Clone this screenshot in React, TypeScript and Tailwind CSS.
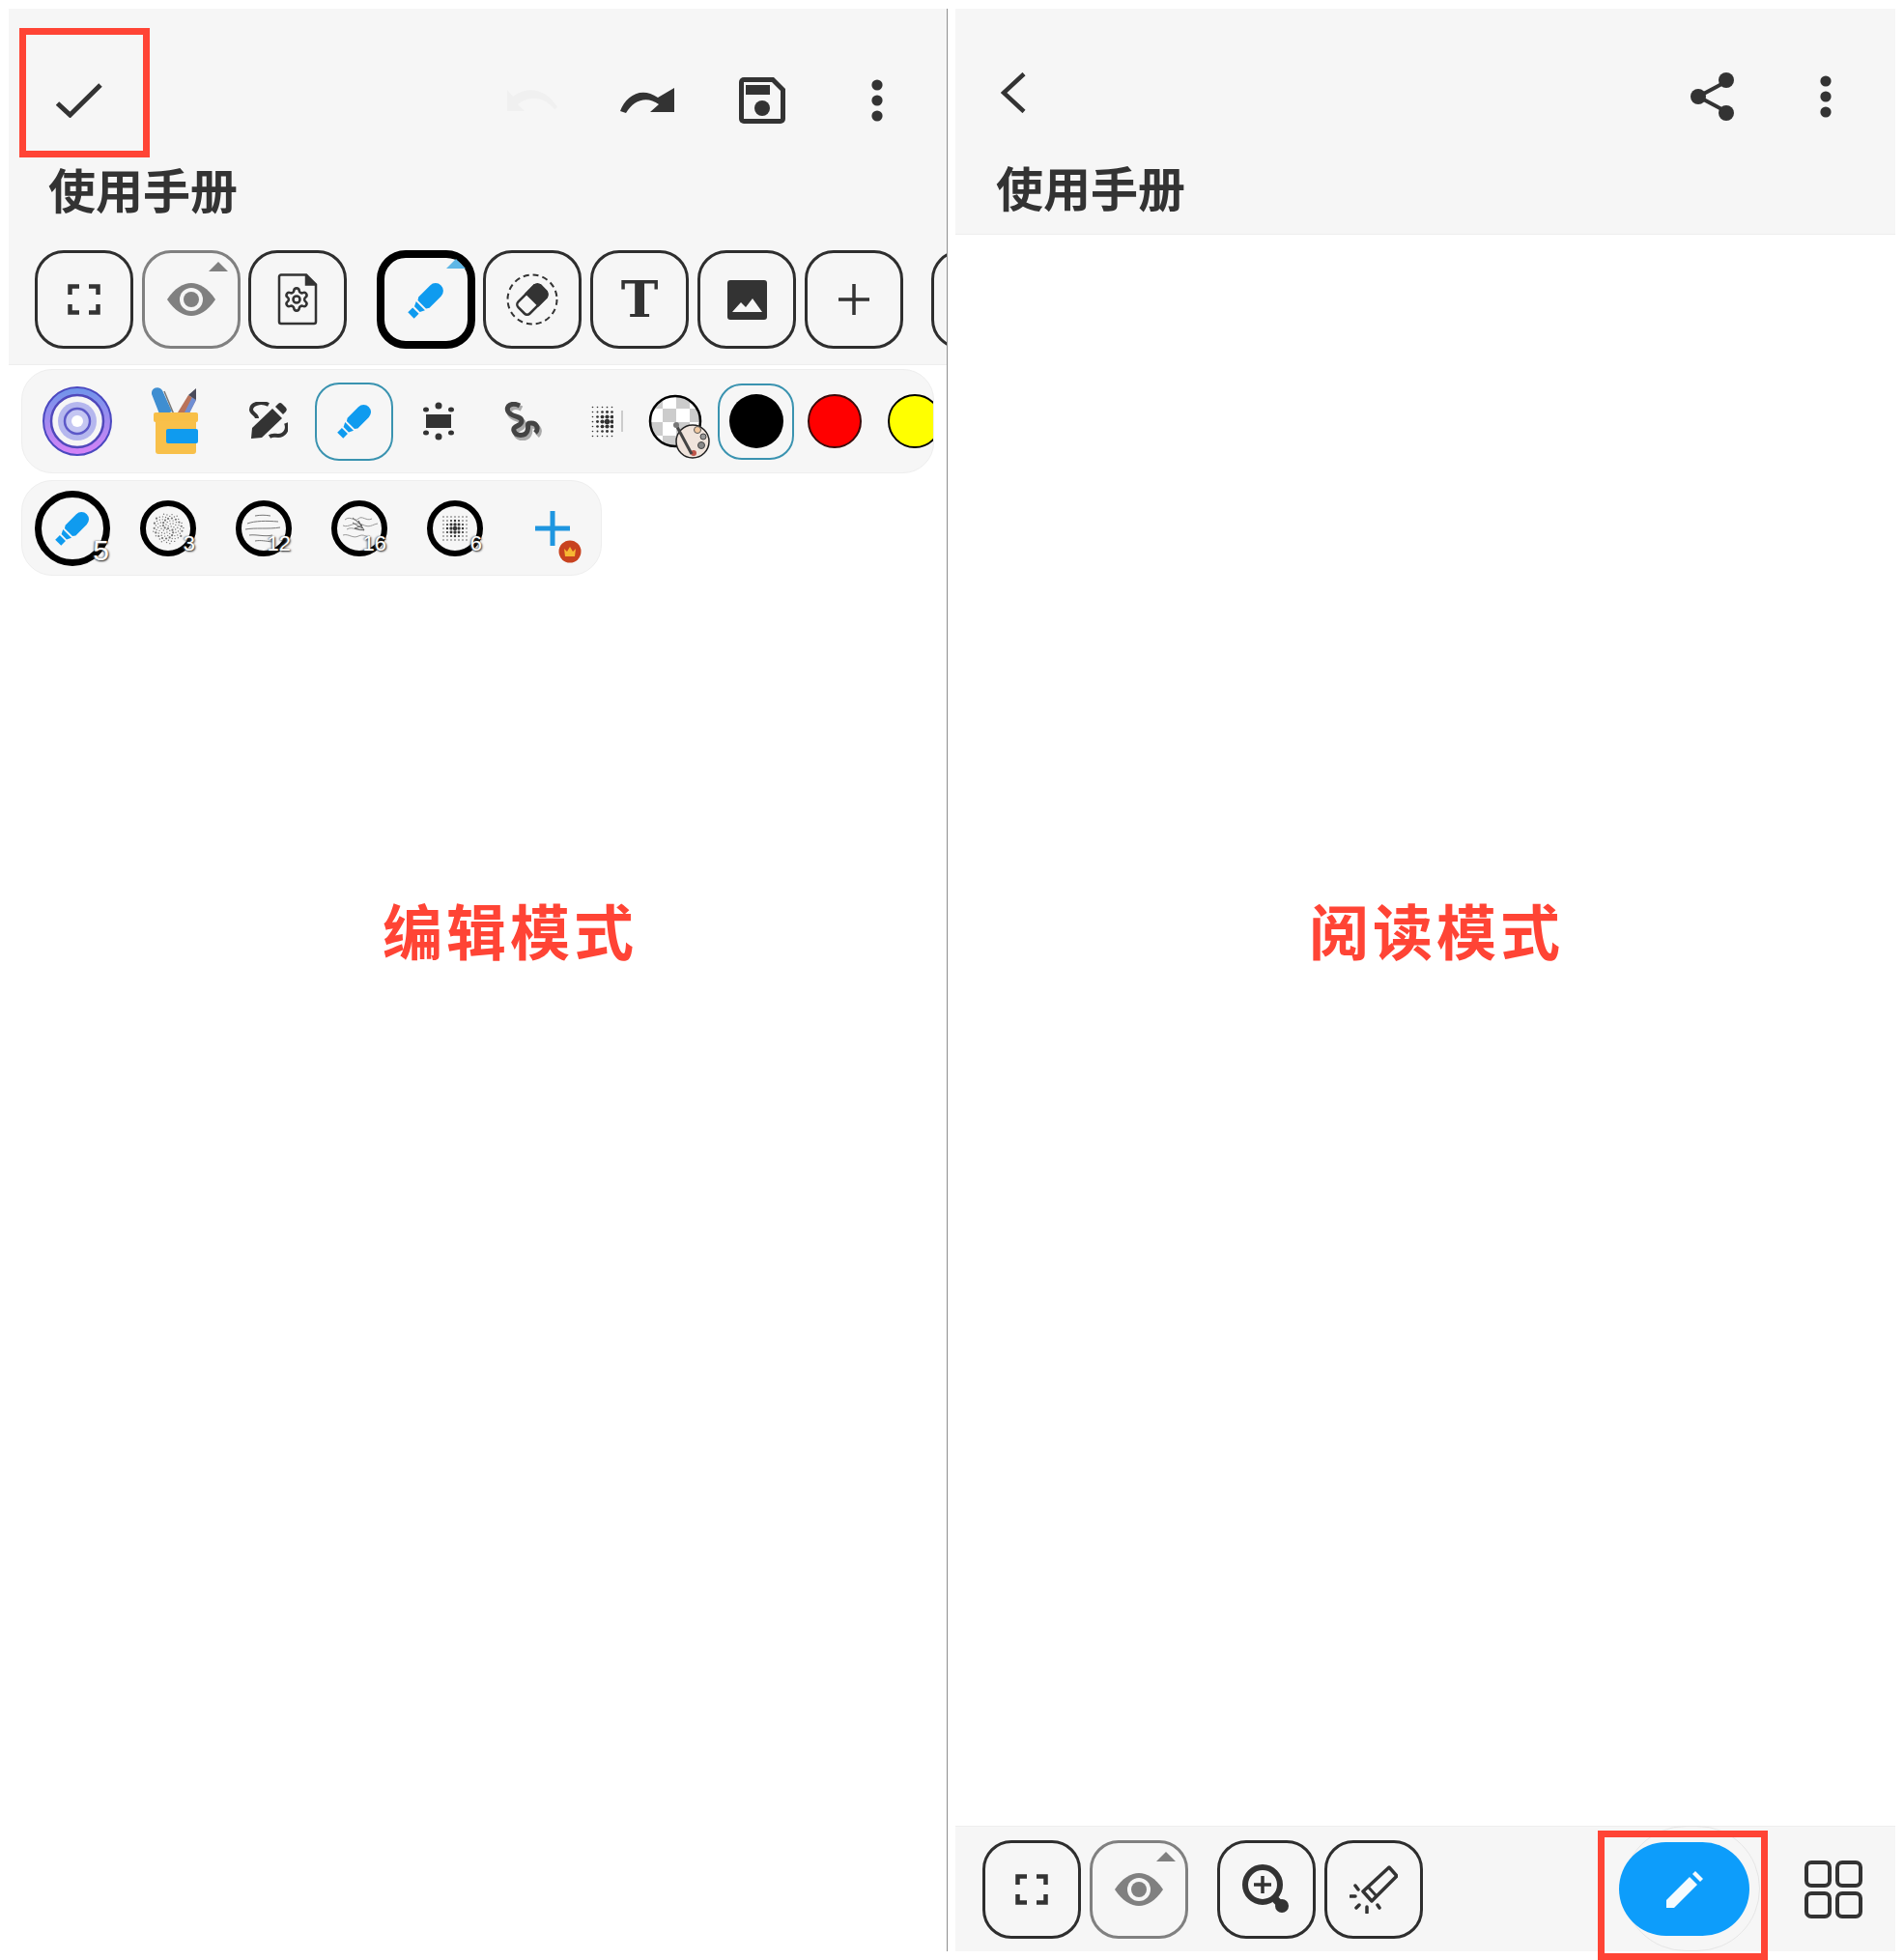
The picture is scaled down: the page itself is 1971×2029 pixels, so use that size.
import type { ReactNode } from "react";
import { Settings } from "lucide-react";

const cjk = "font-['Noto_Sans_CJK_SC','Noto_Sans',sans-serif]";

function Highlighter({ size = 40 }: { size?: number }) {
  return (
    <svg width={size} height={size} viewBox="0 0 40 40" className="overflow-visible">
      <g transform="rotate(45 20 20)" fill="#0f9bef">
        <path d="M12 6a8 8 0 0 1 16 0v17l-2 3H14l-2-3z" />
        <path d="M13.5 28h13l-2.5 5h-8z" />
        <rect x="15.5" y="35" width="9" height="7" />
      </g>
    </svg>
  );
}

function FocusIcon() {
  return (
    <svg width="34" height="32" viewBox="0 0 34 32" fill="none" stroke="#333" strokeWidth="4.5">
      <path d="M2.5 11V2.5H12M22 2.5h9.5V11M31.500 21v8.500H22M12 29.500H2.500V21" />
    </svg>
  );
}

function EyeIcon() {
  return (
    <svg width="50" height="34" viewBox="0 0 50 34">
      <path d="M0 17C8 5 17 0 25 0s17 5 25 17c-8 12-17 17-25 17S8 29 0 17z" fill="#808080" />
      <circle cx="25" cy="17" r="12" fill="#f6f6f6" />
      <circle cx="25" cy="17" r="8" fill="#808080" />
    </svg>
  );
}

function ToolButton({
  children,
  tone = "dark",
  caret,
}: {
  children: ReactNode;
  tone?: "dark" | "gray" | "active";
  caret?: string;
}) {
  const border =
    tone === "active"
      ? "border-[8px] border-black"
      : tone === "gray"
        ? "border-[3px] border-[#808080]"
        : "border-[3px] border-[#2e2e2e]";
  return (
    <div className={`relative flex h-[102px] w-[102px] shrink-0 items-center justify-center rounded-[30px] ${border}`}>
      {children}
      {caret && (
        <svg
          width="20"
          height="10"
          viewBox="0 0 20 10"
          className={`absolute ${tone === "active" ? "right-[2px] top-[1px]" : "right-[10px] top-[9px]"}`}
        >
          <path d="M0 10 10 0l10 10z" fill={caret} />
        </svg>
      )}
    </div>
  );
}

function MoreDots() {
  return (
    <svg width="12" height="44" viewBox="0 0 12 44" fill="#333">
      <circle cx="6" cy="6" r="5.600" />
      <circle cx="6" cy="22" r="5.600" />
      <circle cx="6" cy="38" r="5.600" />
    </svg>
  );
}

function Halftone({ step = 7, n = 5 }: { step?: number; n?: number }) {
  const dots = [];
  for (let i = 0; i < n; i++) {
    for (let j = 0; j < n; j++) {
      const d = Math.hypot(i - (n - 1) / 2, j - (n - 1) / 2);
      const r = Math.max(step * 0.16, step * 0.55 * (1 - d / (n * 0.62)));
      dots.push(<circle key={`${i}-${j}`} cx={i * step + step / 2} cy={j * step + step / 2} r={r} fill="#333" />);
    }
  }
  return (
    <svg width={n * step} height={n * step} viewBox={`0 0 ${n * step} ${n * step}`}>
      {dots}
    </svg>
  );
}

function SpeckleTexture() {
  const dots = [];
  for (let i = 0; i < 90; i++) {
    const a = i * 2.4;
    const r = Math.sqrt(i / 90) * 16;
    dots.push(<circle key={i} cx={29 + Math.cos(a) * r} cy={29 + Math.sin(a) * r} r={i % 4 === 0 ? 1.1 : 0.7} fill="#777" />);
  }
  return <>{dots}</>;
}

function LinesTexture() {
  return (
    <g fill="none" stroke="#777" strokeWidth="1">
      <path d="M20 16c6-1 10-1 16 0M12 24c8-3 20-3 32-2M10 30c10-2 24 0 36-2M14 36c8-1 16 2 24 0M20 42c6-1 10 0 18 1" />
    </g>
  );
}

function ScribbleTexture() {
  return (
    <g fill="none" stroke="#999" strokeWidth="1">
      <path d="M14 20c6-5 10 3 14-1s8 3 14 0M12 26c6 3 12-5 20-1s10 0 16-1M16 30c6-4 12 3 18 0M12 36c6-2 10 4 16 1s8 2 12 0" />
      <path d="M22 18l10 8-8 3 10 2-6-10 4 8-10-6" stroke="#666" />
    </g>
  );
}

function BrushCircle({ label, children }: { label: string; children: ReactNode }) {
  return (
    <div className="relative h-[58px] w-[58px] shrink-0 rounded-full border-[6px] border-black">
      <svg width="58" height="58" viewBox="0 0 58 58" className="absolute left-[-6px] top-[-6px]">
        {children}
      </svg>
      <span className="absolute bottom-[-5px] right-[-5px] font-['Liberation_Sans',sans-serif] text-[22px] leading-[24px] text-white [text-shadow:1px_1px_2px_#222,-1px_0_2px_#666]">
        {label}
      </span>
    </div>
  );
}

function EditorPane() {
  return (
    <div className="h-full w-[972px] shrink-0 overflow-hidden border-r border-[#8f8f8f]">
      {/* Top section */}
      <div className="h-[369px] border-b border-[#eeeeee] bg-[#f6f6f6]">
        <div className="flex h-[60px] translate-y-[65px] items-center pl-[49px]">
          <div className="relative">
            <svg width="48" height="36" viewBox="0 0 48 36" fill="none" stroke="#333" strokeWidth="5" className="block">
              <path d="M1.500 21 14.500 33 46 2" />
            </svg>
            <div className="absolute left-[-38px] top-[-57px] h-[134px] w-[135px] border-[7px] border-[#ff4435]" />
          </div>
          <div className="ml-[419px] flex items-center">
            <svg width="54" height="26" viewBox="0 0 54 26" fill="#f0f0f0">
              <path d="M0 2v22h18L11 17c12-9 26-9 38 5l3-2C40 0 20-2 6 9z" />
            </svg>
            <svg width="56" height="26" viewBox="0 0 56 26" fill="#333" className="ml-[63px]">
              <path d="M0 24C6 8 22-2 39 10L56 0v25H31l9-8C28 8 14 12 6 26z" />
            </svg>
            <svg width="48" height="48" viewBox="0 0 48 48" className="ml-[67px]">
              <path d="M5 0h31l12 12v31a5 5 0 0 1-5 5H5a5 5 0 0 1-5-5V5a5 5 0 0 1 5-5z" fill="#333" />
              <path d="M5 5h29l9 9v29H5z" fill="#f6f6f6" />
              <rect x="7" y="8" width="25" height="10" fill="#333" />
              <circle cx="24" cy="32" r="8" fill="#333" />
            </svg>
            <div className="ml-[89px]">
              <MoreDots />
            </div>
          </div>
        </div>
        <div className={`ml-[41px] mt-[102px] h-[48px] text-[49px] font-bold leading-[48px] text-[#333333] ${cjk}`}>使用手册</div>
        <div className="mt-[40px] flex items-center pl-[27px]">
          <ToolButton>
            <FocusIcon />
          </ToolButton>
          <div className="ml-[9px]">
            <ToolButton tone="gray" caret="#808080">
              <EyeIcon />
            </ToolButton>
          </div>
          <div className="ml-[8px]">
            <ToolButton>
              <svg width="42" height="54" viewBox="0 0 42 54" fill="none" stroke="#333" strokeWidth="2.500">
                <path d="M4 1.500h26l10 10V50a2 2 0 0 1-2 2H4a2 2 0 0 1-2-2V3.500a2 2 0 0 1 2-2z" />
                <path d="M30 1.500v10h10" fill="#333" />
                <Settings x="6" y="13" width="28" height="28" stroke="#333" strokeWidth="2.200" />
              </svg>
            </ToolButton>
          </div>
          <div className="ml-[31px]">
            <ToolButton tone="active" caret="#5fb7e6">
              <div className="translate-y-[1px]">
                <Highlighter />
              </div>
            </ToolButton>
          </div>
          <div className="ml-[8px]">
            <ToolButton>
              <svg width="54" height="54" viewBox="0 0 54 54" fill="none">
                <circle cx="27" cy="27" r="25.500" stroke="#333" strokeWidth="2" strokeDasharray="6 4" />
                <g transform="rotate(45 27 27)">
                  <rect x="18.500" y="11" width="17" height="32" rx="4" fill="#f6f6f6" stroke="#333" strokeWidth="2.500" />
                  <path d="M22 9.500h10l5 5V28H17V14.500z" fill="#333" />
                </g>
              </svg>
            </ToolButton>
          </div>
          <div className="ml-[9px]">
            <ToolButton>
              <span className="font-['DejaVu_Serif',serif] text-[52px] font-bold leading-none text-[#333333]">T</span>
            </ToolButton>
          </div>
          <div className="ml-[9px]">
            <ToolButton>
              <svg width="41" height="41" viewBox="0 0 41 41">
                <rect width="41" height="41" rx="3" fill="#333" />
                <path d="M5 33 14 23l5 5 7-9 10 14z" fill="#f6f6f6" />
              </svg>
            </ToolButton>
          </div>
          <div className="ml-[9px]">
            <ToolButton>
              <svg width="32" height="32" viewBox="0 0 32 32" stroke="#333" strokeWidth="3.500">
                <path d="M16 0v32M0 16h32" />
              </svg>
            </ToolButton>
          </div>
          <div className="ml-[29px]">
            <ToolButton>
              <span />
            </ToolButton>
          </div>
        </div>
      </div>

      {/* Pen strip */}
      <div className="ml-[13px] mt-[4px] flex h-[108px] w-[945px] items-center overflow-hidden rounded-[32px] border border-[#eeeeee] bg-[#f6f6f6] pl-[20px]">
        <svg width="74" height="74" viewBox="0 0 74 74" className="shrink-0">
          <defs>
            <linearGradient id="ring" x1="0" y1="0" x2="0" y2="1">
              <stop offset="0" stopColor="#6d95ea" />
              <stop offset="1" stopColor="#d782f7" />
            </linearGradient>
          </defs>
          <circle cx="37" cy="37" r="35" fill="url(#ring)" stroke="#4b48c0" strokeWidth="2" />
          <circle cx="37" cy="37" r="27" fill="#f6f6f6" stroke="#5048bb" strokeWidth="2.500" />
          <circle cx="37" cy="37" r="20" fill="#b5b7ee" />
          <circle cx="37" cy="37" r="13" fill="#c4c6f2" stroke="#5c58c8" strokeWidth="2.500" />
          <circle cx="37" cy="37" r="6" fill="#ffffff" />
        </svg>
        <svg width="50" height="70" viewBox="0 0 50 70" className="ml-[40px] shrink-0">
          <path d="M0 7a6 6 0 0 1 11-4l10 22-12 5z" fill="#3f8ed1" />
          <path d="M13 4l10 24" stroke="#777" strokeWidth="1.500" />
          <path d="M27 26 38 8l8 5-9 17z" fill="#b9735a" />
          <path d="M33 28 42 10l4 3-8 16z" fill="#6f8ed3" />
          <path d="M38 8l8-7v12z" fill="#4a4a5a" />
          <rect x="2" y="26" width="46" height="10" rx="2" fill="#f8bf47" />
          <path d="M4 35h42v31a3 3 0 0 1-3 3H7a3 3 0 0 1-3-3z" fill="#f8c04a" />
          <rect x="15" y="43" width="33" height="15" rx="2" fill="#0f9bef" />
        </svg>
        <svg width="40" height="40" viewBox="0 0 40 40" fill="#333" className="ml-[51px] shrink-0">
          <path d="M2 38 3 27 24 7l10 10-21 20z" />
          <path d="M27 5l3-3a3 3 0 0 1 4 0l4 4a3 3 0 0 1 0 4l-3 3z" />
          <path d="M20 3C12-1 2 2 2 8c0 4 6 5 6 9" fill="none" stroke="#333" strokeWidth="4" />
          <path d="M38 22c3 7-2 13-8 13-4 0-6-1-9 1" fill="none" stroke="#333" strokeWidth="4" />
        </svg>
        <div className="ml-[28px] flex h-[81px] w-[81px] shrink-0 items-center justify-center rounded-[25px] border-[2.5px] border-[#3a93b0]">
          <Highlighter size={38} />
        </div>
        <svg width="32" height="40" viewBox="0 0 32 40" fill="#333" className="ml-[31px] shrink-0">
          <rect x="3" y="13" width="26" height="14" />
          <circle cx="16" cy="4" r="3.500" />
          <circle cx="16" cy="36" r="3.500" />
          <ellipse cx="3" cy="8" rx="3" ry="2.500" />
          <ellipse cx="29" cy="8" rx="3" ry="2.500" />
          <ellipse cx="3" cy="32" rx="3" ry="2.500" />
          <ellipse cx="29" cy="32" rx="3" ry="2.500" />
        </svg>
        <svg width="42" height="40" viewBox="0 0 42 40" fill="none" className="ml-[52px] shrink-0">
          <path d="M16 4C8 0 1 4 4 10s14 4 14 10-10 4-8 10 12 6 14 0-2-8 4-8 8 6 4 10" stroke="#aaa" strokeWidth="5.500" transform="translate(2 3)" />
          <path d="M16 4C8 0 1 4 4 10s14 4 14 10-10 4-8 10 12 6 14 0-2-8 4-8 8 6 4 10" stroke="#444" strokeWidth="5" />
        </svg>
        <div className="ml-[47px] w-[24px] shrink-0 overflow-hidden">
          <Halftone step={5} n={7} />
        </div>
        <div className="ml-[8px] h-[22px] w-[2px] shrink-0 bg-[#cccccc]" />
        <svg width="66" height="66" viewBox="0 0 66 66" className="ml-[27px] shrink-0 translate-y-[6px] overflow-visible">
          <defs>
            <clipPath id="checker">
              <circle cx="27" cy="27" r="26" />
            </clipPath>
          </defs>
          <circle cx="27" cy="27" r="26" fill="#ffffff" />
          <g clipPath="url(#checker)" fill="#cccccc">
            <rect x="0" y="0" width="14" height="14" />
            <rect x="28" y="0" width="14" height="14" />
            <rect x="14" y="14" width="14" height="14" />
            <rect x="42" y="14" width="14" height="14" />
            <rect x="0" y="28" width="14" height="14" />
            <rect x="28" y="28" width="14" height="14" />
            <rect x="14" y="42" width="14" height="14" />
          </g>
          <circle cx="27" cy="27" r="26" fill="none" stroke="#000" strokeWidth="2.500" />
          <circle cx="45" cy="48" r="17" fill="#f0e4dc" stroke="#222" strokeWidth="1.500" />
          <circle cx="50" cy="36" r="3.500" fill="#f3c9a0" stroke="#555" />
          <circle cx="56" cy="43" r="3" fill="#999" stroke="#444" />
          <circle cx="54" cy="52" r="3.500" fill="#888" stroke="#444" />
          <circle cx="46" cy="60" r="3" fill="#c0554a" />
          <path d="M29 33 44 61" stroke="#444" strokeWidth="3" />
          <circle cx="28" cy="31" r="3" fill="#777" />
        </svg>
        <div className="ml-[5px] flex h-[79px] w-[79px] shrink-0 items-center justify-center rounded-[25px] border-[2.5px] border-[#3a93b0]">
          <div className="h-[56px] w-[56px] rounded-full bg-black" />
        </div>
        <div className="ml-[14px] h-[56px] w-[56px] shrink-0 rounded-full border-[2.5px] border-[#3a0a0a] bg-[#ff0000]" />
        <div className="ml-[27px] h-[56px] w-[56px] shrink-0 rounded-full border-[2.5px] border-black bg-[#ffff00]" />
      </div>

      {/* Brush strip */}
      <div className="ml-[13px] mt-[7px] flex h-[99px] w-[601px] items-center rounded-[32px] border border-[#eeeeee] bg-[#f6f6f6] pl-[13px]">
        <div className="relative flex h-[78px] w-[78px] shrink-0 items-center justify-center rounded-full border-[7px] border-black">
          <Highlighter size={38} />
          <span className="absolute bottom-[-6px] right-[-6px] font-['Liberation_Sans',sans-serif] text-[30px] leading-[30px] text-white [text-shadow:1px_1px_2px_#222,-1px_0_2px_#666]">
            5
          </span>
        </div>
        <div className="ml-[31px]">
          <BrushCircle label="3">
            <SpeckleTexture />
          </BrushCircle>
        </div>
        <div className="ml-[41px]">
          <BrushCircle label="12">
            <LinesTexture />
          </BrushCircle>
        </div>
        <div className="ml-[41px]">
          <BrushCircle label="16">
            <ScribbleTexture />
          </BrushCircle>
        </div>
        <div className="ml-[41px]">
          <BrushCircle label="6">
            <g transform="translate(15 15)">
              <foreignObject width="28" height="28">
                <Halftone step={4} n={7} />
              </foreignObject>
            </g>
          </BrushCircle>
        </div>
        <div className="relative ml-[54px]">
          <svg width="36" height="36" viewBox="0 0 36 36" stroke="#1f96e0" strokeWidth="5" className="block">
            <path d="M18 0v36M0 18h36" />
          </svg>
          <svg width="24" height="24" viewBox="0 0 24 24" className="absolute left-[24px] top-[30px]">
            <circle cx="12" cy="12" r="11.500" fill="#c8421f" />
            <path d="M6 9l3 3 3-5 3 5 3-3-1 8H7z" fill="#f7b733" />
          </svg>
        </div>
      </div>

      <div className={`ml-[387px] mt-[326px] h-[80px] whitespace-nowrap text-[62px] font-bold leading-[80px] tracking-[4px] text-[#ff4435] ${cjk}`}>
        编辑模式
      </div>
    </div>
  );
}

function ReaderPane() {
  return (
    <div className="flex h-full w-[973px] shrink-0 flex-col">
      <div className="h-[234px] border-b border-[#eeeeee] bg-[#f6f6f6]">
        <div className="flex h-[60px] translate-y-[61px] items-center pl-[47px]">
          <svg width="26" height="42" viewBox="0 0 26 42" fill="none" stroke="#333" strokeWidth="4.500" className="-translate-y-[4px]">
            <path d="M24 1.500 3 21l21 19.500" />
          </svg>
          <svg width="46" height="50" viewBox="0 0 46 50" fill="#333" className="ml-[688px]">
            <path d="M38 9 8 25l30 16" fill="none" stroke="#333" strokeWidth="4" />
            <circle cx="37" cy="8" r="8" />
            <circle cx="8" cy="25" r="8" />
            <circle cx="37" cy="42" r="8" />
          </svg>
          <div className="ml-[88px]">
            <MoreDots />
          </div>
        </div>
        <div className={`ml-[42px] mt-[100px] h-[48px] text-[49px] font-bold leading-[48px] text-[#333333] ${cjk}`}>使用手册</div>
      </div>

      <div className={`ml-[366px] mt-[679px] h-[80px] whitespace-nowrap text-[62px] font-bold leading-[80px] tracking-[4px] text-[#ff4435] ${cjk}`}>
        阅读模式
      </div>

      <div className="isolate mt-auto flex h-[130px] items-center border-t border-[#eeeeee] bg-[#f6f6f6] pl-[28px]">
        <ToolButton>
          <FocusIcon />
        </ToolButton>
        <div className="ml-[9px]">
          <ToolButton tone="gray" caret="#808080">
            <EyeIcon />
          </ToolButton>
        </div>
        <div className="ml-[30px]">
          <ToolButton>
            <svg width="50" height="52" viewBox="0 0 50 52" fill="none" stroke="#333">
              <circle cx="21" cy="21" r="18" strokeWidth="6" />
              <path d="M21 12v18M12 21h18" strokeWidth="3.500" />
              <path d="M34 36l8 8" strokeWidth="8" />
              <circle cx="41" cy="43" r="7" fill="#333" stroke="none" />
            </svg>
          </ToolButton>
        </div>
        <div className="ml-[9px]">
          <ToolButton>
            <svg width="50" height="50" viewBox="0 0 50 50" fill="none" stroke="#333">
              <path d="M14 27 41 2l8 9-26 26z" strokeWidth="3.500" strokeLinejoin="round" />
              <path d="M19 22l9 10" strokeWidth="3" />
              <path d="M1 32h5M6 21l3 4M7 44l3-3M18 43v6M29 41l2 3" strokeWidth="3.500" strokeLinecap="round" />
            </svg>
          </ToolButton>
        </div>
        <div className="relative ml-[203px] flex h-[97px] w-[135px] items-center justify-center rounded-full bg-[#0d9dfb]">
          <div className="absolute left-[4px] top-[-17px] -z-10 h-[130px] w-[142px] rounded-full border border-[#e6e6e6]" />
          <svg width="38" height="38" viewBox="0 0 38 38" fill="#f4fbff" className="relative">
            <path d="M0 30 24 6l8 8L8 38H0z" />
            <path d="M27 3l3-3 8 8-3 3z" />
          </svg>
          <div className="absolute left-[-22px] top-[-12px] h-[134px] w-[176px] border-[7px] border-[#ff4435]" />
        </div>
        <svg width="60" height="60" viewBox="0 0 60 60" fill="none" stroke="#333" strokeWidth="4" className="ml-[57px]">
          <rect x="2" y="2" width="24" height="24" rx="5" />
          <rect x="34" y="2" width="24" height="24" rx="5" />
          <rect x="2" y="34" width="24" height="24" rx="5" />
          <rect x="34" y="34" width="24" height="24" rx="5" />
        </svg>
      </div>
    </div>
  );
}

export default function App() {
  return (
    <div className="h-[2029px] w-[1971px] overflow-hidden bg-white pb-[9px] pl-[9px] pt-[9px]">
      <div className="flex h-full gap-[8px]">
        <EditorPane />
        <ReaderPane />
      </div>
    </div>
  );
}
